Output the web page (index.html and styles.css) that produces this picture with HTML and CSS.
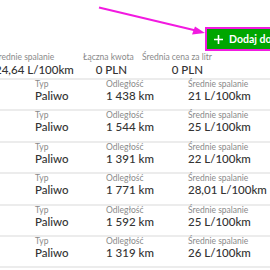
FILE: index.html
```html
<!DOCTYPE html>
<html lang="pl">
<head>
<meta charset="utf-8">
<link rel="stylesheet" href="styles.css">
</head>
<body>
<div class="page">
  <div class="top">
    <button class="add-btn" type="button">
      <svg class="plus" width="9" height="9" viewBox="0 0 9 9"><path d="M4.5 0V9M0 4.5H9" stroke="#fff" stroke-width="1.6"/></svg>
      <span>Dodaj dowód tankowania</span>
    </button>
  </div>
  <svg class="arrow" width="270" height="60" viewBox="0 0 270 60">
    <path d="M99 7.5L200 31.5" stroke="#f21ae0" stroke-width="2" fill="none"/>
    <path d="M205 33L192 34.5L195 26.5Z" fill="#f21ae0"/>
  </svg>
  <div class="stats">
    <div class="stat stat-first"><div class="stat-label">Średnie spalanie</div><div class="stat-value">24,64 L/100km</div></div>
    <div class="stat stat-sum"><div class="stat-label">Łączna kwota</div><div class="stat-value">0 PLN</div></div>
    <div class="stat stat-price"><div class="stat-label">Średnia cena za litr</div><div class="stat-value">0 PLN</div></div>
  </div>
  <div class="list">
    <div class="row"><div class="cell"><div class="lbl">Typ</div><div class="val">Paliwo</div></div><div class="cell"><div class="lbl">Odległość</div><div class="val">1 438 km</div></div><div class="cell"><div class="lbl">Średnie spalanie</div><div class="val">21 L/100km</div></div></div>
    <div class="row"><div class="cell"><div class="lbl">Typ</div><div class="val">Paliwo</div></div><div class="cell"><div class="lbl">Odległość</div><div class="val">1 544 km</div></div><div class="cell"><div class="lbl">Średnie spalanie</div><div class="val">25 L/100km</div></div></div>
    <div class="row"><div class="cell"><div class="lbl">Typ</div><div class="val">Paliwo</div></div><div class="cell"><div class="lbl">Odległość</div><div class="val">1 391 km</div></div><div class="cell"><div class="lbl">Średnie spalanie</div><div class="val">22 L/100km</div></div></div>
    <div class="row"><div class="cell"><div class="lbl">Typ</div><div class="val">Paliwo</div></div><div class="cell"><div class="lbl">Odległość</div><div class="val">1 771 km</div></div><div class="cell"><div class="lbl">Średnie spalanie</div><div class="val">28,01 L/100km</div></div></div>
    <div class="row"><div class="cell"><div class="lbl">Typ</div><div class="val">Paliwo</div></div><div class="cell"><div class="lbl">Odległość</div><div class="val">1 592 km</div></div><div class="cell"><div class="lbl">Średnie spalanie</div><div class="val">25 L/100km</div></div></div>
    <div class="row"><div class="cell"><div class="lbl">Typ</div><div class="val">Paliwo</div></div><div class="cell"><div class="lbl">Odległość</div><div class="val">1 319 km</div></div><div class="cell"><div class="lbl">Średnie spalanie</div><div class="val">26 L/100km</div></div></div>
  </div>
</div>
</body>
</html>
```

FILE: styles.css
```css
html, body {
  margin: 0;
  padding: 0;
  background: #fff;
}
body {
  width: 270px;
  height: 270px;
  overflow: hidden;
  font-family: Lato, "Open Sans", sans-serif;
  color: #333;
}
.page {
  position: relative;
}
.top {
  height: 53px;
  padding-top: 27px;
  padding-left: 205px;
  box-sizing: border-box;
}
.add-btn {
  display: flex;
  align-items: center;
  gap: 6px;
  height: 24px;
  box-sizing: border-box;
  border: 2px solid #f21ae0;
  background: #00a600;
  color: #fff;
  font-family: Lato, sans-serif;
  font-size: 10.5px;
  font-weight: 700;
  padding: 0 0 0 7px;
  white-space: nowrap;
  margin: 0;
}
.plus {
  flex: none;
}
.arrow {
  position: absolute;
  left: 0;
  top: 0;
}
.stats {
  display: flex;
  height: 25px;
  border-bottom: 2px solid #ececec;
  white-space: nowrap;
}
.stat-label {
  font-size: 8.5px;
  line-height: 9px;
  color: #8a8a8a;
}
.stat-value {
  font-size: 11.5px;
  line-height: 13px;
  margin-top: 1px;
  font-weight: 500;
  color: #333;
}
.stat-first {
  margin-left: -6px;
  width: 89px;
  flex: none;
}
.stat-first .stat-value {
  margin-left: 1px;
}
.stat-sum {
  width: 44px;
  flex: none;
  text-align: right;
}
.stat-price {
  margin-left: 15px;
  width: 61px;
  flex: none;
  text-align: right;
}
.list {
  display: flex;
  flex-direction: column;
}
.row {
  display: grid;
  grid-template-columns: 71px 82px 1fr;
  padding-left: 35px;
  height: 29.4px;
  border-bottom: 2px solid #ececec;
  align-content: start;
  padding-top: 0;
}
.lbl {
  font-size: 8.5px;
  line-height: 9px;
  color: #8a8a8a;
  white-space: nowrap;
}
.val {
  font-size: 11.5px;
  line-height: 13px;
  font-weight: 500;
  color: #333;
  white-space: nowrap;
}
```
